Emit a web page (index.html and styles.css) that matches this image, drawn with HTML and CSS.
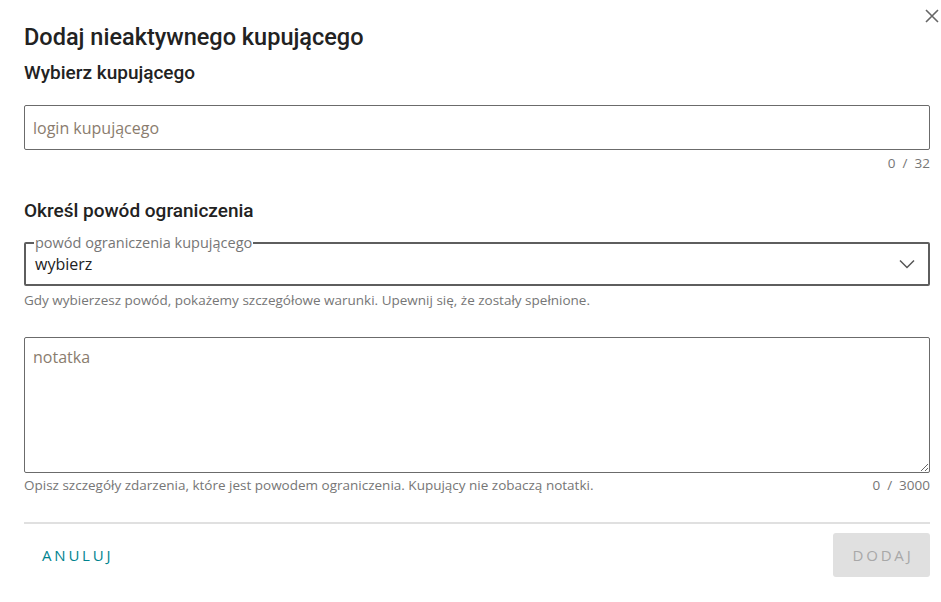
FILE: index.html
```html
<!DOCTYPE html>
<html lang="pl">
<head>
    <meta charset="utf-8">
    <meta name="viewport" content="width=device-width, initial-scale=1">
    <title>Dodaj nieaktywnego kupującego</title>
    <link rel="stylesheet" href="styles.css">
</head>
<body>

<div class="dialog">
    <button class="close" aria-label="Zamknij">
        <svg width="14" height="14" viewBox="0 0 14 14">
            <path d="M1 1 L13 13 M13 1 L1 13" stroke="#666" stroke-width="1.6" fill="none"/>
        </svg>
    </button>

    <h1>Dodaj nieaktywnego kupującego</h1>

    <h2 class="first">Wybierz kupującego</h2>
    <div class="field login">
        <input type="text" class="input" placeholder="login kupującego">
        <div class="hint-row">
            <span></span>
            <span class="counter">0&nbsp;&nbsp;/&nbsp;&nbsp;32</span>
        </div>
    </div>

    <h2 class="second">Określ powód ograniczenia</h2>
    <div class="field reason">
        <fieldset class="select">
            <legend>powód ograniczenia kupującego</legend>
            <span class="value">wybierz</span>
            <svg class="chevron" width="16" height="10" viewBox="0 0 16 10">
                <path d="M1 1.5 L8 8.5 L15 1.5" stroke="#555" stroke-width="1.5" fill="none"/>
            </svg>
        </fieldset>
        <div class="hint-row">
            <span>Gdy wybierzesz powód, pokażemy szczegółowe warunki. Upewnij się, że zostały spełnione.</span>
        </div>
    </div>

    <div class="field note">
        <textarea class="textarea" placeholder="notatka"></textarea>
        <div class="hint-row">
            <span>Opisz szczegóły zdarzenia, które jest powodem ograniczenia. Kupujący nie zobaczą notatki.</span>
            <span class="counter">0&nbsp;&nbsp;/&nbsp;&nbsp;3000</span>
        </div>
    </div>

    <div class="footer">
        <button class="btn-cancel">Anuluj</button>
        <button class="btn-add" disabled>Dodaj</button>
    </div>
</div>

</body>
</html>
```

FILE: styles.css
```css
body {
    margin: 0;
    font-family: "Open Sans", Arial, sans-serif;
    color: #222;
    background: #fff;
}
.dialog {
    position: relative;
    padding: 22px 11px 0 24px;
}
.close {
    position: absolute;
    top: 9px;
    right: 2px;
    border: none;
    background: none;
    padding: 0;
    cursor: pointer;
}
h1 {
    margin: 0;
    font-family: Roboto, sans-serif;
    font-weight: 500;
    font-size: 23.5px;
    line-height: 30px;
    color: #222;
}
h2 {
    margin: 0;
    font-family: Roboto, sans-serif;
    font-weight: 500;
    font-size: 19px;
    line-height: 24px;
    color: #222;
}
h2.first {
    margin-top: 9px;
    margin-bottom: 20px;
}
h2.second {
    margin-bottom: 13px;
}
.field.login {
    margin-bottom: 27px;
}
.field.reason {
    margin-bottom: 28px;
}
.input {
    display: block;
    box-sizing: border-box;
    width: 100%;
    height: 45px;
    padding: 0 8px;
    border: 1px solid #6b6b6b;
    border-radius: 2px;
    font-family: "Open Sans", sans-serif;
    font-size: 16px;
    color: #222;
    outline: none;
}
.input::placeholder,
.textarea::placeholder {
    color: #8a7c6e;
}
.hint-row {
    display: flex;
    justify-content: space-between;
    padding-top: 4px;
    font-size: 13.5px;
    line-height: 18px;
    color: #767676;
}
.counter {
    white-space: nowrap;
}
.select {
    display: flex;
    align-items: center;
    box-sizing: border-box;
    height: 50px;
    margin: 0;
    padding: 0 9px 6px;
    border: 2px solid #5e5e5e;
    border-radius: 2px;
}
.select legend {
    padding: 0 1px;
    margin-left: -1px;
    font-size: 14.5px;
    line-height: 14px;
    color: #767676;
}
.select .value {
    flex: 1;
    font-size: 16px;
    color: #222;
}
.chevron {
    margin-right: 4px;
}
.reason .hint-row {
    padding-top: 5px;
}
.textarea {
    display: block;
    box-sizing: border-box;
    width: 100%;
    height: 136px;
    padding: 8px 8px;
    border: 1px solid #6b6b6b;
    border-radius: 2px;
    font-family: "Open Sans", sans-serif;
    font-size: 16px;
    line-height: 22px;
    resize: vertical;
    outline: none;
}
.note .hint-row {
    padding-top: 3px;
}
.footer {
    display: flex;
    justify-content: space-between;
    align-items: center;
    margin-top: 28px;
    padding-top: 9px;
    border-top: 2px solid #e0e0e0;
}
.footer button {
    font-family: "Open Sans", sans-serif;
    font-size: 15px;
    text-transform: uppercase;
    letter-spacing: 2.8px;
    border: none;
    height: 44px;
}
.btn-cancel {
    background: none;
    color: #00838f;
    padding: 0 18px;
    cursor: pointer;
}
.btn-add {
    width: 97px;
    padding: 0 0 0 3px;
    background-color: #e0e0e0;
    color: #a8a8a8;
    border-radius: 3px;
}
```
